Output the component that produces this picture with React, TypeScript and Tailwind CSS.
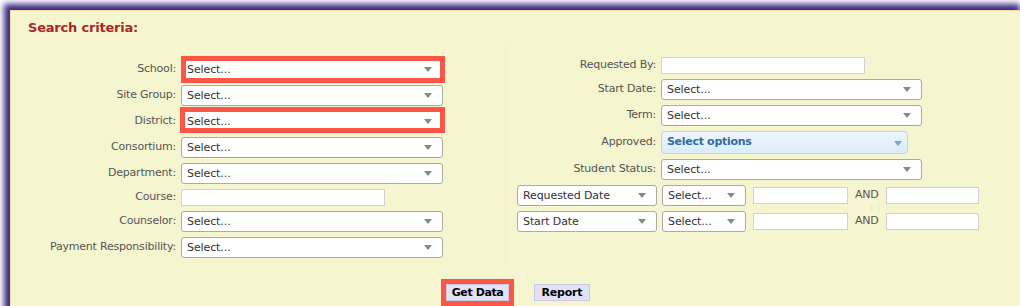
import React from "react";

const Tri = ({ color = "#888" }: { color?: string }) => (
  <svg width="8" height="5" viewBox="0 0 8 5" className="shrink-0">
    <polygon points="0,0 8,0 4,5" fill={color} />
  </svg>
);

function Sel({ w, text = "Select..." }: { w: string; text?: string }) {
  return (
    <div
      className={`${w} h-[21px] bg-white border border-[#aaaaaa] rounded-[3px] flex items-center justify-between pl-[5px] pr-[10px] text-[#333333] shrink-0`}
    >
      <span className="leading-none whitespace-nowrap tracking-[-0.1px]">{text}</span>
      <Tri />
    </div>
  );
}

function Inp({ w }: { w: string }) {
  return <div className={`${w} h-[17px] bg-white border border-[#d2d2d2] shrink-0`} />;
}

function Row({ label, lw, children }: { label: string; lw: string; children: React.ReactNode }) {
  return (
    <div className="flex items-center gap-[5px]">
      <div className={`${lw} text-right text-[#555555] whitespace-nowrap shrink-0 tracking-[-0.2px]`}>{label}</div>
      {children}
    </div>
  );
}

export default function App() {
  return (
    <div
      className="w-[1020px] h-[306px] overflow-hidden bg-white text-[11px]"
      style={{ fontFamily: '"DejaVu Sans", Verdana, sans-serif' }}
    >
      <div className="ml-[10px] mt-[10px] w-[1016px] h-[320px] bg-[#f5f5cf] border-t border-l border-[#f2dc9e] shadow-[-6px_-6px_6px_#3a2b84]">
        <div className="pl-[17px] pt-[9px] text-[13px] leading-[16px] font-bold text-[#a52a2a] tracking-[-0.2px]">
          Search criteria:
        </div>
        <div className="flex mt-[9px]">
          {/* left column */}
          <div className="w-[496px] border-r-2 border-[#fbf0c4] pt-[14px] pb-[4px] flex flex-col gap-[5px]">
            <Row label="School:" lw="w-[165px]">
              <div className="relative">
                <Sel w="w-[262px]" />
                <div className="absolute -top-[3px] -bottom-[3px] left-0 -right-[2px] border-[5px] border-[#fd5546]" />
              </div>
            </Row>
            <Row label="Site Group:" lw="w-[165px]">
              <Sel w="w-[262px]" />
            </Row>
            <Row label="District:" lw="w-[165px]">
              <div className="relative">
                <Sel w="w-[262px]" />
                <div className="absolute -top-[4px] -bottom-[1px] -left-[1px] -right-[2px] border-[5px] border-[#fd5546]" />
              </div>
            </Row>
            <Row label="Consortium:" lw="w-[165px]">
              <Sel w="w-[262px]" />
            </Row>
            <Row label="Department:" lw="w-[165px]">
              <Sel w="w-[262px]" />
            </Row>
            <Row label="Course:" lw="w-[165px]">
              <Inp w="w-[204px]" />
            </Row>
            <Row label="Counselor:" lw="w-[165px]">
              <Sel w="w-[262px]" />
            </Row>
            <Row label="Payment Responsibility:" lw="w-[165px]">
              <Sel w="w-[262px]" />
            </Row>
          </div>
          {/* right column */}
          <div className="flex-1 pt-[12px] flex flex-col gap-[5px]">
            <Row label="Requested By:" lw="w-[149px]">
              <Inp w="w-[204px]" />
            </Row>
            <Row label="Start Date:" lw="w-[149px]">
              <Sel w="w-[261px]" />
            </Row>
            <Row label="Term:" lw="w-[149px]">
              <Sel w="w-[261px]" />
            </Row>
            <Row label="Approved:" lw="w-[149px]">
              <div className="w-[247px] h-[23px] rounded-[4px] border border-[#b9d6ee] bg-gradient-to-b from-[#eef6fd] to-[#dcebfa] flex items-center justify-between pl-[5px] pr-[5px] pb-[2px] font-bold text-[#2e6e9e]">
                <span className="leading-none tracking-[-0.3px]">Select options</span>
                <span className="pt-[4px]">
                  <Tri color="#6ea8d6" />
                </span>
              </div>
            </Row>
            <Row label="Student Status:" lw="w-[149px]">
              <Sel w="w-[261px]" />
            </Row>
            {["Requested Date", "Start Date"].map((t) => (
              <div key={t} className="flex items-center pl-[10px]">
                <Sel w="w-[140px]" text={t} />
                <div className="ml-[5px]">
                  <Sel w="w-[84px]" />
                </div>
                <div className="ml-[7px]">
                  <Inp w="w-[95px]" />
                </div>
                <div className="ml-[7px] w-[31px] text-[#555555] tracking-[-0.2px]">AND</div>
                <Inp w="w-[93px]" />
              </div>
            ))}
          </div>
        </div>
        <div className="flex pl-[435px] mt-[22px] gap-[25px]">
          <div className="relative">
            <div className="w-[63px] h-[17px] flex items-center justify-center bg-[#e1e1f8] border border-[#c9c9e3] font-bold text-black leading-none tracking-[-0.4px]">
              Get Data
            </div>
            <div className="absolute -top-[5px] -bottom-[5px] -left-[5px] -right-[5px] border-[5px] border-[#fd5546]" />
          </div>
          <div className="w-[56px] h-[17px] flex items-center justify-center bg-[#e1e1f8] border border-[#c9c9e3] font-bold text-black leading-none tracking-[-0.2px]">
            Report
          </div>
        </div>
      </div>
    </div>
  );
}
